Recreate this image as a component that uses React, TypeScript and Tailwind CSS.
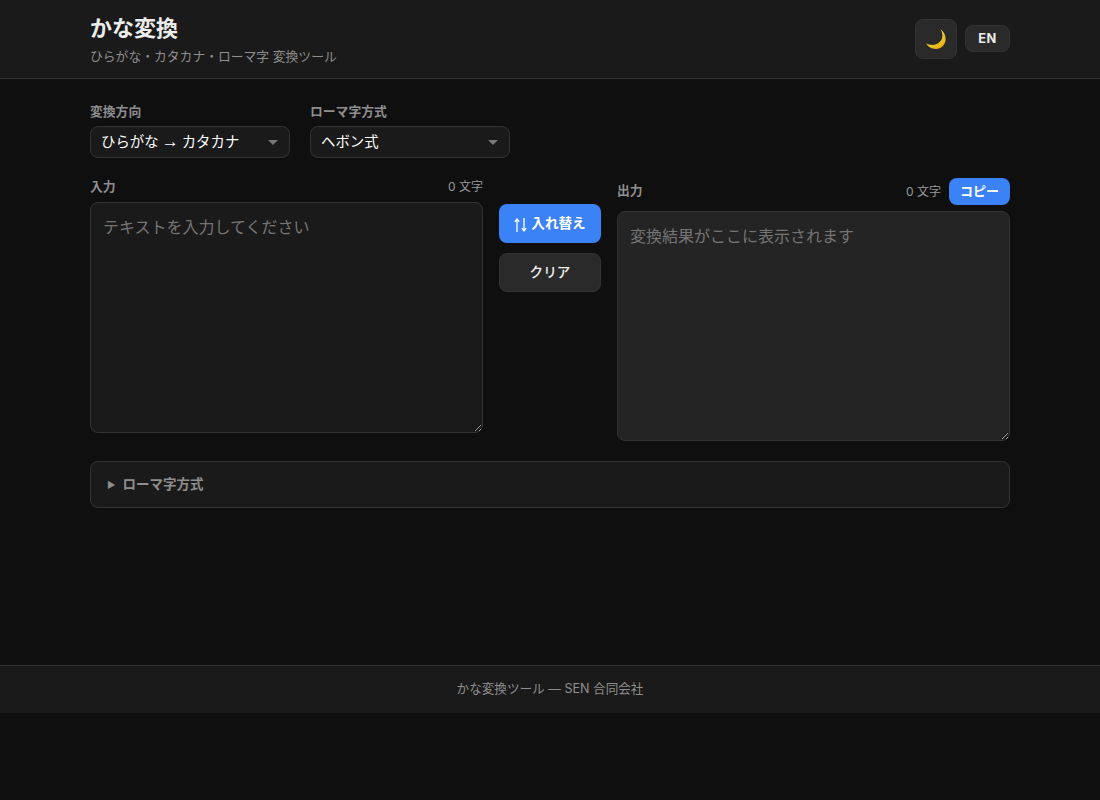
import { useState } from "react";

const FONT = '"Inter", "Liberation Sans", "Noto Sans CJK JP", sans-serif';

function SelectBox({ label, children }: { label: string; children: React.ReactNode }) {
  return (
    <div className="flex flex-col gap-1.5">
      <span className="text-[12.8px] leading-[17px] font-semibold text-[#8e8e8e]">{label}</span>
      <div className="flex h-8 w-[200px] items-center justify-between rounded-lg border border-[#333333] bg-[#1a1a1a] pr-[11px] pl-[10px] text-[14.4px] leading-5 text-white">
        <span className="-mt-px">{children}</span>
        <svg width="10" height="5" viewBox="0 0 10 5">
          <path d="M0 0h10L5 5z" fill="#777777" />
        </svg>
      </div>
    </div>
  );
}

function MoonIcon() {
  return (
    <svg width="20" height="20" viewBox="0 0 20 20">
      <defs>
        <linearGradient id="moon" x1="0" y1="0" x2="0.6" y2="1">
          <stop offset="0" stopColor="#fde68a" />
          <stop offset="1" stopColor="#eab308" />
        </linearGradient>
      </defs>
      <path
        d="M14.5 0.3C18 3 20 7 19.6 11C19 16 15 20 10 20C6 20 2 18 0 14.3C1.5 15.4 4 16 6.2 16C11.5 16 16.4 12 16.4 6.8C16.4 4.2 15.6 2 14.5 0.3Z"
        fill="url(#moon)"
      />
    </svg>
  );
}

function SwapIcon() {
  return (
    <svg width="13" height="14" viewBox="0 0 13 14" fill="none" stroke="white" strokeWidth="1.3">
      <path d="M3 14V1M0.8 3.8L3 1L5.2 3.8" />
      <path d="M10 0V13M7.8 10.2L10 13L12.2 10.2" />
    </svg>
  );
}

export default function App() {
  const [input, setInput] = useState("");

  return (
    <div className="min-h-[800px] bg-[#0f0f0f]" style={{ fontFamily: FONT }}>
      <header className="h-[79px] border-b border-[#333333] bg-[#1a1a1a]">
        <div className="mx-auto flex h-full w-[920px] items-center justify-between">
          <div>
            <h1 className="text-[22px] leading-[30px] font-bold text-[#ececec]">かな変換</h1>
            <p className="mt-1.5 text-[12.8px] leading-4 text-[#8e8e8e]">ひらがな・カタカナ・ローマ字 変換ツール</p>
          </div>
          <div className="flex items-center gap-2">
            <button className="flex h-10 w-[42px] items-center justify-center rounded-lg border border-[#333333] bg-[#2a2a2a]">
              <MoonIcon />
            </button>
            <button className="mb-px h-[27px] w-[45px] rounded-lg border border-[#333333] bg-[#2a2a2a] text-[12.8px] font-bold tracking-[0.5px] text-[#ececec]">
              EN
            </button>
          </div>
        </div>
      </header>

      <main className="mx-auto h-[586px] w-[920px] pt-6">
        <div className="flex gap-5">
          <SelectBox label="変換方向">
            ひらがな{" "}
            <span className="-mx-px text-[17px] leading-none" style={{ fontFamily: '"Liberation Sans"' }}>
              →
            </span>{" "}
            カタカナ
          </SelectBox>
          <SelectBox label="ローマ字方式">ヘボン式</SelectBox>
        </div>

        <div className="mt-5 flex gap-4">
          <div className="flex flex-1 flex-col gap-1.5">
            <div className="flex h-[18px] items-center justify-between">
              <span className="-mt-px text-[12.8px] font-semibold text-[#8e8e8e]">入力</span>
              <span className="text-xs text-[#999999]">0 文字</span>
            </div>
            <textarea
              value={input}
              onChange={(e) => setInput(e.target.value)}
              placeholder="テキストを入力してください"
              className="h-[231px] w-full rounded-lg border border-[#333333] bg-[#1a1a1a] px-3 py-3 text-base text-[#f0f0f0] outline-none placeholder:text-[#757575]"
            />
          </div>

          <div className="flex w-[102px] flex-col gap-2.5 pt-[26px]">
            <button className="flex h-[39px] items-center justify-center gap-1 rounded-lg bg-[#3b82f6] text-[13.6px] font-semibold text-white">
              <span className="mt-[3px]">
                <SwapIcon />
              </span>
              <span className="-mt-px">入れ替え</span>
            </button>
            <button className="h-[39px] rounded-lg border border-[#333333] bg-[#2a2a2a] pb-px text-[13.6px] font-medium text-[#f0f0f0]">
              クリア
            </button>
          </div>

          <div className="flex flex-1 flex-col gap-1.5">
            <div className="flex h-[27px] items-center justify-between">
              <span className="-mt-px text-[12.8px] font-semibold text-[#8e8e8e]">出力</span>
              <div className="flex items-center gap-2">
                <span className="text-xs text-[#999999]">0 文字</span>
                <button className="h-[27px] w-[61px] rounded-lg bg-[#3b82f6] text-[13px] font-bold text-white">
                  コピー
                </button>
              </div>
            </div>
            <textarea
              readOnly
              placeholder="変換結果がここに表示されます"
              className="h-[230px] w-full rounded-lg border border-[#333333] bg-[#242424] px-3 py-3 text-base text-[#f0f0f0] outline-none placeholder:text-[#757575]"
            />
          </div>
        </div>

        <div className="mt-5 flex h-[47px] items-center gap-[7px] rounded-lg border border-[#333333] bg-[#1a1a1a] px-4 text-[13.5px] font-semibold text-[#8e8e8e]">
          <span className="text-[9px]">▶</span>
          ローマ字方式
        </div>
      </main>

      <footer className="flex h-[48px] items-center justify-center border-t border-[#333333] bg-[#1a1a1a] text-[12.6px] text-[#8e8e8e]">
        かな変換ツール — SEN 合同会社
      </footer>
    </div>
  );
}
